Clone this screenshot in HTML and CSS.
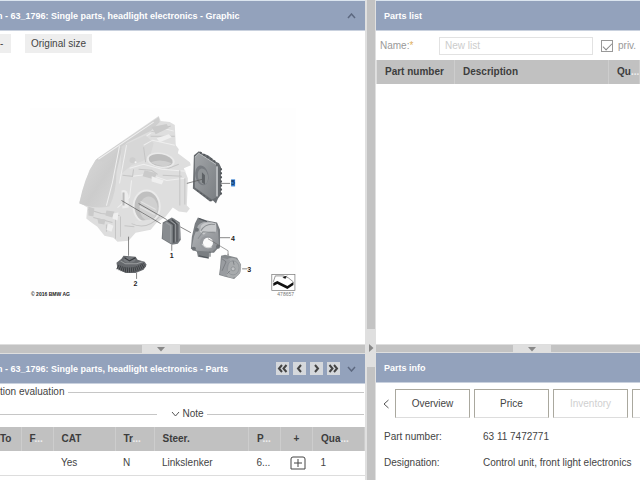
FILE: index.html
```html
<!DOCTYPE html>
<html lang="en">
<head>
<meta charset="utf-8">
<title>Parts catalogue</title>
<link rel="stylesheet" href="styles.css">
</head>
<body>
<main class="workspace">
  <div class="column column-left">
    <section class="panel">
      <header class="panel-head">
        <h2 class="cut">n - 63_1796: Single parts, headlight electronics - Graphic</h2>
        <button class="toggle" aria-label="Collapse graphic"><svg width="9" height="6" viewBox="0 0 9 6"><path d="M1 5 4.500 1 8 5"/></svg></button>
      </header>
      <div class="toolbar">
        <button class="tool tool-minus">-</button>
        <button class="tool">Original size</button>
      </div>
      <svg class="graphic" viewBox="30 108 265 190" role="img" aria-label="Headlight electronics">
        <defs>
          <linearGradient id="lens" x1="0" y1="0" x2="1" y2="1"><stop offset="0" stop-color="#dcdcdc"/><stop offset=".55" stop-color="#cccccc"/><stop offset="1" stop-color="#dadada"/></linearGradient>
          <linearGradient id="unit" x1="0" y1="0" x2="1" y2="1"><stop offset="0" stop-color="#a2a5a8"/><stop offset="1" stop-color="#7b7f83"/></linearGradient>
          <linearGradient id="metal" x1="0" y1="0" x2="1" y2="1"><stop offset="0" stop-color="#b4b7ba"/><stop offset="1" stop-color="#898c90"/></linearGradient>
        </defs>
        <rect x="30" y="108" width="265" height="190" fill="#fefefe"/>
        <!-- lamp housing -->
        <path fill="#dedede" d="M158 116 160 121 169 122 174 125 175 145 178 149 177 153 189 162 190 165 183 168 187 178 186 205 189 208 186 212 178 211 172 207 165 216 156 222 150 229 135 232 128 240 117 241 113 237 104 235 97 226 91 222 86 218 87 207 79 202 89 170 97 158Z"/>
        <path fill="url(#lens)" d="M79 203Q84 177 95 160L121 142Q124 141 122 146L116 172Q116 192 109 206Q94 209 79 203Z"/>
        <path fill="#cfcfcf" d="M95 160 158 117 159 122 150 131 127 142 112 155 104 162Z"/>
        <path fill="#d7d7d7" d="M121 146 145 135 153 143 149 158 131 165 120 174Z"/>
        <path fill="none" stroke="#efefef" stroke-width="1" d="M119 146 112 182 106 205M126 145 119 183M98 159 153 122M146 136 158 127 173 131M143 145 152 140 174 145M129 168 143 164 161 169 185 171M132 176 148 174 166 180 184 178M117 207 129 197 131 180"/>
        <path fill="none" stroke="#c5c5c5" stroke-width="1" d="M150 132 170 126M150 136 174 136M143 147 145 162M152 165 168 168 178 164M138 169 151 170 157 174M162 175 181 176M122 175 132 176 133 169M179 170V205M184 178V204M88 209 101 213 119 215M93 217 112 222M106 224V231M115 216V238M120 216V236M124 225 134 226"/>
        <path fill="#cacaca" d="M88 206 94 208 93 216 88 215ZM106 210 114 211 112 217 105 215ZM97 218 105 219 104 224 98 223ZM151 127 166 124 168 128 155 134ZM144 170 156 173 154 179 142 176Z"/>
        <path fill="#efefef" d="M113 213 118 212 117 220 112 218ZM108 223 113 225 111 231 106 229ZM156 138 168 134 171 137 159 142ZM151 176 163 180 161 184 151 181Z"/>
        <ellipse cx="160" cy="160" rx="14" ry="7.500" transform="rotate(9 160 160)" fill="#e9e9e9"/>
        <ellipse cx="160" cy="160" rx="12" ry="6" transform="rotate(9 160 160)" fill="#bcbcbc"/>
        <path fill="#cfcfcf" d="M150 162Q160 158 171 163L166 166Q157 166 150 162Z"/>
        <circle cx="132" cy="160" r="3" fill="#cecece"/><circle cx="135" cy="162" r="1" fill="#f5f5f5"/>
        <path d="M121 190Q126 188 128 195V207L122 208Z" fill="#ededed"/><path d="M123 192V205" stroke="#bbb" stroke-width="2"/>
        <ellipse cx="146" cy="206" rx="14" ry="17" fill="#ebebeb"/>
        <ellipse cx="146" cy="206" rx="12" ry="15" fill="#c0c0c0"/>
        <ellipse cx="148" cy="208" rx="9" ry="12" fill="#d0d0d0"/>
        <path d="M140 201 155 209M139 206 154 214M141 212 151 218" stroke="#e2e2e2"/>
        <path d="M134 221 158 218 150 228 134 231Z" fill="#e0e0e0"/><path d="M131 223Q146 230 159 216" fill="none" stroke="#c5c5c5"/>
        <!-- guide lines -->
        <path fill="none" stroke="#555" stroke-width=".700" d="M121 200 160 223M138 203 166 219M179 226 190 232M219 183H229M128 236V255M171 244V250M217 237H229M227 253V258M241 268H246M136 272V278"/>
        <!-- control unit 5 -->
        <path fill="#696d71" d="M193 155 198 151 201 153 204 154 207 155 211 158 214 161 218 163 220 167V194L217 198 215 203 212 200 209 201 196 191 192 188Z"/>
        <path fill="url(#unit)" d="M194 157 198 153 215 164V197L211 199 194 187Z"/>
        <path fill="none" stroke="#d3d5d6" d="M194 157 198 153 215 164" stroke-width=".700"/>
        <path stroke="#55595d" stroke-width="2" stroke-dasharray="2 2" d="M220 168V195M199 152 215 162"/>
        <path d="M216 166V196" stroke="#b4b7ba" stroke-width="2"/>
        <ellipse cx="201" cy="175" rx="6.500" ry="10" transform="rotate(-12 201 175)" fill="#777b80"/>
        <ellipse cx="202" cy="176" rx="5" ry="8" transform="rotate(-12 202 176)" fill="#8f9396"/>
        <path d="M201 172V182L204 184V175Z" fill="#5e6266"/>
        <path d="M196 190 211 201" stroke="#54585c" stroke-dasharray="2 2"/>
        <path d="M186 183 201 179" stroke="#555" stroke-width=".700"/>
        <!-- module 1 -->
        <path fill="#74787c" d="M162 222 171 217 173 218 179 222 180 239 177 243 171 244 161 238Z"/>
        <path d="M162 224 166 221 171 224V243L162 238Z" fill="#888c90"/>
        <path d="M167 220 173 224V242M171 219 176 223V241" fill="none" stroke="#4e5256" stroke-width="1.500"/>
        <path d="M165 222 170 225V242M170 220 175 224V241M175 221 179 224V238" fill="none" stroke="#a7aaad" stroke-width=".700"/>
        <!-- ballast 4 -->
        <path fill="#7a7e82" d="M197 217 206 220 216 222 219 229 219 245 213 252 208 252 208 258 197 256 196 251 190 248 191 236 194 223Z"/>
        <path fill="url(#metal)" d="M197 225Q204 218 215 223L217 231 218 245 211 251 196 250 191 246 193 236Z"/>
        <path fill="#c7c9cb" d="M200 225Q204 220 215 223L215 231Q206 230 203 234L199 231Z"/>
        <path d="M200 230Q205 222 214 224M197 238 202 231 214 232" fill="none" stroke="#8b8f92"/>
        <circle cx="206" cy="242" r="7" fill="#96999d"/><circle cx="207" cy="242" r="5" fill="#fafafa"/>
        <path d="M201 243Q205 249 211 246" stroke="#d4d5d6" fill="none"/>
        <circle cx="193" cy="248" r="2" fill="#6d7175"/><circle cx="217" cy="246" r="2" fill="#6d7175"/><circle cx="196" cy="229" r="2" fill="#6d7175"/>
        <path d="M198 218 206 221M198 255 207 257M209 251V256" stroke="#50555a"/>
        <path d="M207 238 227 250V254" fill="none" stroke="#666" stroke-width=".600"/>
        <!-- motor 3 -->
        <path fill="#85898c" d="M220 255 224 254 236 257 240 264 239 272 233 278 225 276 218 274 219 267Z"/>
        <ellipse cx="231" cy="267" rx="9" ry="10" fill="#a8abad"/>
        <path d="M221 257 229 259 225 276 219 273Z" fill="#999ca0"/>
        <ellipse cx="232" cy="267" rx="6" ry="7" fill="none" stroke="#8c9094" stroke-width=".700"/>
        <circle cx="232" cy="268" r="2" fill="#c0c2c4" stroke="#85898c" stroke-width=".700"/>
        <path d="M221 258 225 261 221 270M232 260 233 264M226 273 229 270" stroke="#676b70" stroke-width=".600" fill="none"/>
        <!-- fan 2 -->
        <path fill="#66696d" d="M116 262 121 258 123 255 135 256 137 259 144 261 146 264 143 269 135 272 125 272 117 268Z"/>
        <path d="M117 266Q130 273 144 264" stroke="#3c3f42" stroke-width="5" stroke-dasharray="1 1" fill="none"/>
        <path d="M120 260 125 263 136 263 142 261" stroke="#9a9d9f" fill="none"/>
        <ellipse cx="129" cy="259" rx="6" ry="3" fill="#777a7e"/><path d="M124 257 129 260 135 257" stroke="#36393d" fill="none"/>
        <!-- legend -->
        <rect x="230" y="179" width="4" height="7" fill="#3b82d0"/>
        <g class="callout"><text x="230" y="185" fill="#173e70">5</text><text x="169" y="257">1</text><text x="133" y="285">2</text><text x="246" y="271">3</text><text x="230" y="240">4</text></g>
        <text class="copyright" x="31" y="295">© 2016 BMW AG</text>
        <rect x="270.500" y="273.500" width="23" height="16" fill="#fff" stroke="#777" stroke-width=".700"/>
        <path d="M272 282 276 280 286 285 292 281V284L286 288 276 283 272 285Z" fill="#111"/>
        <path d="M272 281 274 275H282L287 277 292 281M282 277 286 275" fill="none" stroke="#555" stroke-width=".600"/><path d="M281 276 285 275 284 278Z" fill="#111"/>
        <text class="drawing-no" x="276" y="295">478657</text>
      </svg>
    </section>
    <div class="splitter"><button class="grip" aria-label="Collapse"><svg width="8" height="5" viewBox="0 0 8 5"><path d="M0 0H8L4 4.500Z"/></svg></button></div>
    <section class="panel">
      <header class="panel-head">
        <h2 class="cut">n - 63_1796: Single parts, headlight electronics - Parts</h2>
        <nav class="pager">
          <button aria-label="First"><svg viewBox="0 0 13 13"><path d="M6 3 3 6.500 6 10M10.500 3 7.500 6.500 10.500 10"/></svg></button>
          <button aria-label="Previous"><svg viewBox="0 0 13 13"><path d="M8 3 5 6.500 8 10"/></svg></button>
          <button aria-label="Next"><svg viewBox="0 0 13 13"><path d="M5 3 8 6.500 5 10"/></svg></button>
          <button aria-label="Last"><svg viewBox="0 0 13 13"><path d="M2.500 3 5.500 6.500 2.500 10M7 3 10 6.500 7 10"/></svg></button>
        </nav>
        <button class="toggle" aria-label="Collapse parts"><svg width="9" height="6" viewBox="0 0 9 6"><path d="M1 1 4.500 5 8 1"/></svg></button>
      </header>
      <div class="divider divider-first"><span>tion evaluation</span></div>
      <div class="divider divider-note"><button class="note"><svg width="9" height="6" viewBox="0 0 9 6"><path d="M1 1 4.500 5 8 1"/></svg>Note</button></div>
      <table class="grid parts">
        <thead><tr><th class="c-to">To</th><th class="c-f">F<i>...</i></th><th class="c-cat">CAT</th><th class="c-tr">Tr<i>...</i></th><th>Steer.</th><th class="c-p">P<i>...</i></th><th class="c-add">+</th><th class="c-qty">Qua<i>...</i></th></tr></thead>
        <tbody>
          <tr><td></td><td></td><td>Yes</td><td>N</td><td>Linkslenker</td><td>6...</td><td class="add"><button aria-label="Add part"><svg viewBox="0 0 16 14"><path d="M1 13V3Q1 1 3 1H13Q15 1 15 3V13ZM4 7H12M8 3V11"/></svg></button></td><td>1</td></tr>
          <tr><td></td><td></td><td></td><td></td><td></td><td></td><td class="add"><button aria-label="Add part"><svg viewBox="0 0 16 14"><path d="M1 13V3Q1 1 3 1H13Q15 1 15 3V13ZM4 7H12M8 3V11"/></svg></button></td><td></td></tr>
        </tbody>
      </table>
    </section>
  </div>
  <div class="v-splitter"><button aria-label="Collapse right side"><svg width="5" height="8" viewBox="0 0 5 8"><path d="M0 0V8L4.500 4Z"/></svg></button></div>
  <div class="column column-right">
    <section class="panel">
      <header class="panel-head"><h2>Parts list</h2></header>
      <form class="list-form">
        <label class="name-label" for="list-name">Name:<b>*</b></label>
        <input class="name-box" id="list-name" type="text" placeholder="New list">
        <input class="tick" id="private" type="checkbox" checked>
        <label class="private-label" for="private">priv.</label>
      </form>
      <table class="grid list">
        <thead><tr><th class="c-number">Part number</th><th>Description</th><th class="c-quantity">Qu<i>...</i></th></tr></thead>
      </table>
    </section>
    <div class="splitter"><button class="grip" aria-label="Collapse"><svg width="8" height="5" viewBox="0 0 8 5"><path d="M0 0H8L4 4.500Z"/></svg></button></div>
    <section class="panel">
      <header class="panel-head"><h2>Parts info</h2></header>
      <div class="tabs">
        <button class="tab-back" aria-label="Previous tabs"><svg width="6" height="10" viewBox="0 0 6 10"><path d="M5.500 1 1 5 5.500 9"/></svg></button>
        <button class="tab">Overview</button>
        <button class="tab">Price</button>
        <button class="tab" disabled>Inventory</button>
        <button class="tab" aria-label="More"></button>
      </div>
      <dl class="facts">
        <dt>Part number:</dt><dd>63 11 7472771</dd>
        <dt>Designation:</dt><dd>Control unit, front light electronics</dd>
      </dl>
    </section>
  </div>
</main>
</body>
</html>
```

FILE: styles.css
```css
* { box-sizing: border-box; }

body {
  margin: 0;
  overflow: hidden;
  background: #fff;
  color: #444;
  font: 10px/14px "Liberation Sans", Arial, sans-serif;
}

button {
  margin: 0;
  padding: 0;
  border: 0;
  background: none;
  color: inherit;
  font: inherit;
}

svg { display: block; }

.workspace {
  display: grid;
  grid-template-columns: minmax(0, 365fr) 11px minmax(0, 264fr);
  grid-template-rows: minmax(0, 1fr);
  height: 100vh;
}

.column { display: grid; min-width: 0; }
.column-left { grid-template-rows: minmax(0, 344fr) 10px minmax(0, 126fr); }
.column-right { grid-template-rows: minmax(0, 344fr) 9px minmax(0, 127fr); }

.panel { min-width: 0; overflow: hidden; background: #fff; }

.panel-head {
  display: flex;
  align-items: center;
  height: 31px;
  padding-right: 9px;
  border-top: 1px solid #dbe5ef;
  border-bottom: 1px solid #c9d1de;
  background: #93a2bc;
  color: #fff;
}
.splitter + .panel .panel-head { height: 30px; border-top: 0; }
.panel-head h2 {
  flex: 1;
  margin: 0 0 0 8px;
  font-size: 9px;
  line-height: 14px;
  white-space: nowrap;
}
.panel-head .cut { margin-left: -3px; }

.toggle path { fill: none; stroke: #5d6980; stroke-width: 1.5; }

.toolbar { display: flex; gap: 14px; padding-top: 3px; }
.tool {
  height: 19px;
  padding: 0 6px;
  background: #eee;
}
.tool-minus { width: 11px; padding: 0; text-align: left; }

.graphic { width: 73%; margin: 55px 0 0 30px; }
.callout { font: bold 7px "Liberation Sans", Arial, sans-serif; fill: #222; }
.copyright { font: bold 5px "Liberation Sans", Arial, sans-serif; fill: #222; }
.drawing-no { font: 5px "Liberation Sans", Arial, sans-serif; fill: #777; }

.splitter {
  border: solid #dedede;
  border-width: 1px 0;
  background: #c3c3c3;
}
.grip {
  display: grid;
  place-items: center;
  width: 38px;
  height: 8px;
  background: #dfdfdf;
}
.grip path, .v-splitter path { fill: #888; }
.column-left .grip { margin-left: 39%; }
.column-right .grip { margin-left: 52%; }

.v-splitter {
  display: flex;
  align-items: center;
  padding-top: 216px;
  border: solid #e0e0e0;
  border-width: 0 1px 0 2px;
  background: #c3c3c3;
}
.v-splitter button {
  display: grid;
  place-items: center;
  width: 100%;
  height: 38px;
  background: #dfdfdf;
}

.pager { display: flex; gap: 4px; margin-right: 7px; }
.pager button { width: 13px; height: 13px; background: #d5d8dc; }
.pager path { fill: none; stroke: #444; stroke-width: 2; }

.divider { display: flex; align-items: center; gap: 3px; margin-right: 1px; }
.divider::after { content: ""; flex: 1; height: 1px; background: #c6c6c6; }
.divider-first { height: 16px; }
.divider-note { height: 14px; margin-top: 7px; }
.divider-note::before { content: ""; width: 43%; height: 1px; margin-right: 11px; background: #c6c6c6; }
.note { display: flex; align-items: center; gap: 3px; }
.note path { fill: none; stroke: #555; }

.grid {
  width: 100%;
  border-collapse: collapse;
  table-layout: fixed;
}
.grid th, .grid td {
  height: 24px;
  padding: 0 0 0 8px;
  overflow: hidden;
  text-align: left;
  white-space: nowrap;
}
.grid th { border-right: 1px solid #cdcdcd; background: #c1c1c1; color: #3d3d3d; }
.grid th i { color: #eee; font-style: normal; }
.grid td { border-bottom: 1px solid #ddd; }

.parts { margin-top: 6px; }
.grid .c-to { width: 21px; padding-left: 0; }
.grid .c-f { width: 32px; }
.grid .c-cat { width: 62px; }
.grid .c-tr { width: 39px; }
.grid .c-p, .grid .c-add { width: 32px; }
.grid .c-add { padding: 0; text-align: center; }
.grid .c-qty { width: 52px; }
.grid .add { padding: 0 0 0 9px; }
.add button { display: block; width: 16px; height: 14px; }
.add path { fill: none; stroke: #444; }

.list-form { display: flex; align-items: center; height: 29px; padding-left: 4px; color: #999; }
.name-label { width: 59px; }
.name-label b { color: #e0b060; font-weight: normal; }
.name-box {
  flex: 1;
  min-width: 0;
  height: 18px;
  padding: 0 5px;
  border: 1px solid #e2e2e2;
  font: inherit;
}
.name-box::placeholder { color: #ccc; }
.tick {
  appearance: none;
  display: grid;
  place-items: center;
  width: 12px;
  height: 12px;
  margin: 0 5px 0 8px;
  border: 1px solid #999;
}
.tick:checked::before {
  content: "";
  width: 8px;
  height: 4px;
  border: solid #888;
  border-width: 0 0 1px 1px;
  rotate: -45deg;
}
.private-label { width: 22px; }

.list { border-left: 1px solid #ddd; }
.list .c-number { width: 78px; }
.list .c-quantity { width: 31px; }

.tabs { display: flex; gap: 4px; padding: 6px 0 0 7px; }
.tab-back { flex: 0 0 8px; }
.tab-back path { fill: none; stroke: #555; }
.tab {
  flex: 0 0 75px;
  height: 29px;
  border: 1px solid #aaa89e;
  border-bottom-color: #ddd;
}
.tab:disabled { color: #d0d0d0; }

.facts {
  display: grid;
  grid-template-columns: 99px 1fr;
  row-gap: 12px;
  margin: 12px 0 0 8px;
  white-space: nowrap;
}
.facts dd { margin: 0; }
```
